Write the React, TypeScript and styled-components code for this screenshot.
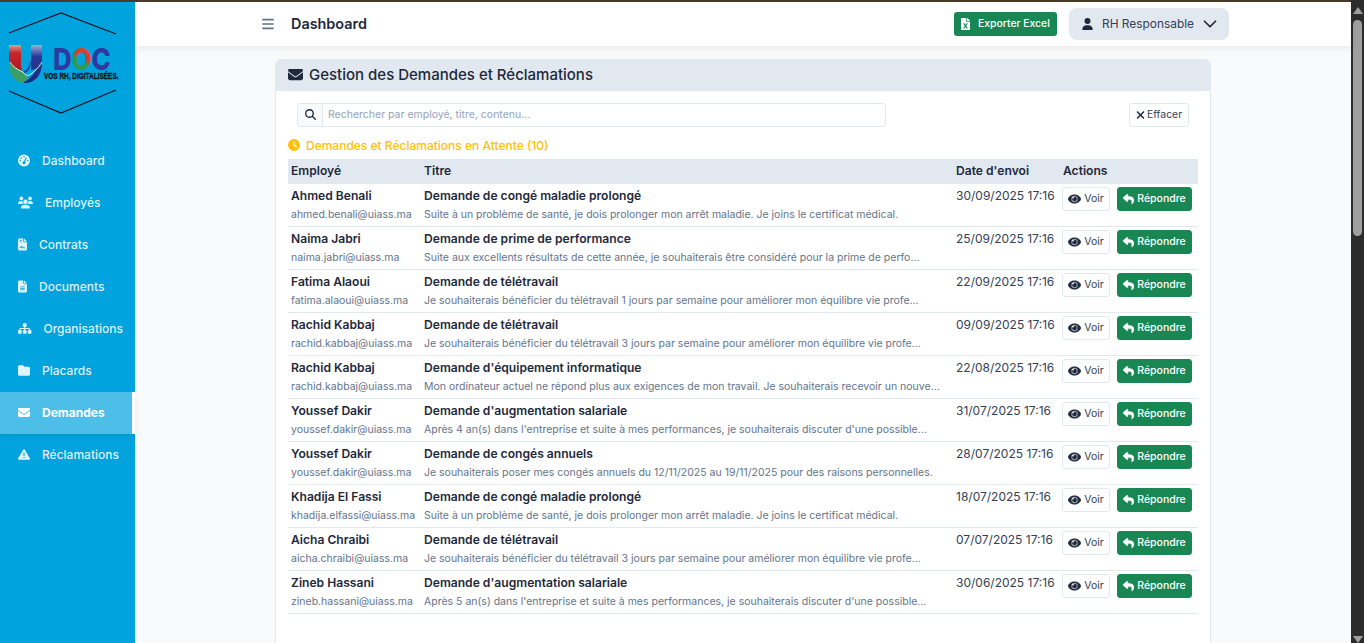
import React from 'react';
import styled, { createGlobalStyle } from 'styled-components';
import { ChevronDown } from 'lucide-react';
import { FaEye, FaFileExcel, FaReply } from 'react-icons/fa';
import {
  FaBars,
  FaClock,
  FaEnvelope,
  FaFileContract,
  FaFileLines,
  FaFolder,
  FaGaugeHigh,
  FaMagnifyingGlass,
  FaSitemap,
  FaTriangleExclamation,
  FaUser,
  FaUsers,
  FaXmark,
} from 'react-icons/fa6';

const GlobalStyle = createGlobalStyle`
  html, body {
    margin: 0;
    height: 100%;
    overflow: hidden;
  }
  body {
    font-family: Inter, "Liberation Sans", sans-serif;
    color: #1e293b;
    background: #f8fafc;
  }
  * {
    box-sizing: border-box;
  }
`;

const Shell = styled.div`
  display: flex;
  height: 100vh;
`;

const Page = styled.div`
  flex: 1;
  min-width: 0;
  display: flex;
  flex-direction: column;
`;

const TopStrip = styled.div`
  height: 2px;
  flex: none;
  background: #4b3b2a;
`;

const Frame = styled.div`
  display: flex;
  flex: 1;
  min-height: 0;
`;

const Sidebar = styled.aside`
  width: 135px;
  flex: none;
  background: #00a3de;
`;

const LogoBox = styled.div`
  height: 126px;
  margin-bottom: 12px;
  svg {
    display: block;
  }
`;

const Nav = styled.nav`
  display: flex;
  flex-direction: column;
`;

const NavItem = styled.a<{ $active?: boolean; $iconWidth: number }>`
  display: flex;
  align-items: center;
  gap: 12px;
  height: 42px;
  padding: 0 0 2px 18px;
  font-size: 12px;
  font-weight: ${p => (p.$active ? 700 : 500)};
  color: ${p => (p.$active ? '#fff' : 'rgba(255, 255, 255, 0.88)')};
  background: ${p => (p.$active ? 'rgba(255, 255, 255, 0.3)' : 'transparent')};
  border-right: 3px solid ${p => (p.$active ? '#fff' : 'transparent')};
  box-shadow: ${p => (p.$active ? '0 2px 5px rgba(0, 0, 0, 0.08)' : 'none')};
  svg {
    height: 13px;
    width: ${p => p.$iconWidth}px;
    flex: none;
  }
`;

const Main = styled.div`
  flex: 1;
  min-width: 0;
  display: flex;
  flex-direction: column;
`;

const Header = styled.header`
  position: relative;
  z-index: 1;
  flex: none;
  height: 44px;
  display: flex;
  align-items: center;
  padding: 0 122px 0 127px;
  background: #fff;
  box-shadow: 0 2px 8px rgba(0, 0, 0, 0.07);
`;

const MenuToggle = styled.span`
  display: flex;
  color: #64748b;
  margin-right: 17px;
  svg {
    height: 14px;
    width: 12px;
  }
`;

const PageTitle = styled.h1`
  margin: 0 0 2px;
  font-size: 14.4px;
  font-weight: 600;
  color: #1e293b;
`;

const HeaderActions = styled.div`
  margin-left: auto;
  display: flex;
  align-items: center;
  gap: 12px;
`;

const ExportButton = styled.button`
  display: flex;
  align-items: center;
  gap: 8px;
  width: 103px;
  height: 24px;
  padding: 0 0 2px 7px;
  border: 0;
  border-radius: 3px;
  background: #198754;
  color: #fff;
  font: 500 10.4px Inter, sans-serif;
  svg {
    height: 12px;
    width: 9px;
    margin-top: 1px;
  }
`;

const UserButton = styled.button`
  display: flex;
  align-items: center;
  width: 160px;
  height: 32px;
  padding: 0 8px 0 13px;
  border: 0;
  border-radius: 8px;
  background: #e2e8f0;
  color: #334155;
  font: 400 11.9px Inter, sans-serif;
  span {
    padding-bottom: 2px;
  }
  svg:first-child {
    color: #1e293b;
    height: 12px;
    width: 11px;
    margin-right: 9px;
  }
  svg:last-child {
    color: #1e293b;
    margin-left: auto;
  }
`;

const Content = styled.main`
  flex: 1;
  min-height: 0;
  overflow: hidden;
  padding: 13px 140px 0 140px;
`;

const Card = styled.section`
  min-height: 700px;
  background: #fff;
  border: 1px solid #e2e8f0;
  border-radius: 6px 6px 0 0;
`;

const CardHeader = styled.div`
  height: 31px;
  display: flex;
  align-items: center;
  gap: 6px;
  padding: 0 0 2px 12px;
  background: #e2e8f0;
  border-radius: 5px 5px 0 0;
  font-size: 15px;
  font-weight: 500;
  color: #1e293b;
  svg {
    height: 15px;
    width: 15px;
  }
`;

const CardBody = styled.div`
  padding: 12px 12px 0;
`;

const SearchRow = styled.div`
  display: flex;
  justify-content: space-between;
  padding: 0 9px;
`;

const SearchGroup = styled.div`
  display: flex;
  width: 589px;
  height: 24px;
  border: 1px solid #e2e8f0;
  border-radius: 3px;
`;

const SearchIcon = styled.span`
  width: 25px;
  display: flex;
  align-items: center;
  justify-content: center;
  padding-bottom: 1px;
  background: #f8fafc;
  border-right: 1px solid #e2e8f0;
  font-size: 11px;
  color: #1e293b;
`;

const SearchInput = styled.input`
  flex: 1;
  border: 0;
  outline: 0;
  padding: 0 5px 2px;
  background: transparent;
  font: 400 10.5px Inter, sans-serif;
  &::placeholder {
    color: #94a3b8;
    opacity: 1;
  }
`;

const ClearButton = styled.button`
  display: flex;
  align-items: center;
  justify-content: center;
  gap: 2px;
  width: 60px;
  height: 24px;
  padding: 0 0 2px;
  border: 1px solid #e2e8f0;
  border-radius: 3px;
  background: #fff;
  color: #334155;
  font: 400 10.4px Inter, sans-serif;
  svg {
    color: #1e293b;
    height: 12px;
    width: 9px;
    margin-top: 1px;
  }
`;

const SectionTitle = styled.h2`
  display: flex;
  align-items: center;
  gap: 6px;
  height: 18px;
  margin: 9px 0 5px;
  font-size: 12px;
  font-weight: 500;
  color: #ffc107;
  svg {
    height: 12px;
    width: 12px;
  }
`;

const Table = styled.table`
  width: 100%;
  table-layout: fixed;
  border-collapse: separate;
  border-spacing: 0;
`;

const HeadCell = styled.th<{ $width: number }>`
  width: ${p => p.$width}px;
  height: 25px;
  padding: 0 3px 2px;
  text-align: left;
  background: #e2e8f0;
  font-size: 12.1px;
  font-weight: 600;
  color: #1e293b;
`;

const Cell = styled.td`
  height: 43px;
  padding: 4px 3px 0;
  border-bottom: 1px solid #e2e8f0;
  vertical-align: top;
  font-size: 12px;
  white-space: nowrap;
  overflow: hidden;
`;

const Strong = styled.div`
  font-size: 12.1px;
  line-height: 16px;
  font-weight: 600;
  color: #1e293b;
`;

const Muted = styled.div`
  margin-top: 3px;
  font-size: 10.5px;
  line-height: 16px;
  color: #64748b;
`;

const DateText = styled.div`
  line-height: 16px;
  color: #334155;
`;

const Actions = styled.div`
  display: flex;
  gap: 7px;
  margin: -1px 0 0 -1px;
`;

const RowButton = styled.button<{ $primary?: boolean }>`
  display: flex;
  align-items: center;
  justify-content: center;
  gap: 3px;
  width: ${p => (p.$primary ? 75 : 48)}px;
  height: 24px;
  padding: 0 0 1px;
  border: 1px solid ${p => (p.$primary ? '#198754' : '#e2e8f0')};
  border-radius: 3px;
  background: ${p => (p.$primary ? '#198754' : '#fff')};
  color: ${p => (p.$primary ? '#fff' : '#334155')};
  font: ${p => (p.$primary ? 500 : 400)} 10.5px Inter, sans-serif;
  svg {
    color: ${p => (p.$primary ? '#fff' : '#1e293b')};
    height: 12px;
    width: ${p => (p.$primary ? 11 : 13)}px;
    stroke-width: 24px;
  }
`;

const ScrollRail = styled.div`
  width: 13px;
  flex: none;
  display: flex;
  flex-direction: column;
  align-items: center;
  padding: 7px 0 0;
  background: #2c2c2c;
`;

const ScrollArrow = styled.span<{ $down?: boolean }>`
  flex: none;
  width: 0;
  height: 0;
  border-left: 5px solid transparent;
  border-right: 5px solid transparent;
  ${p => (p.$down ? 'border-top: 7px solid #9f9f9f;' : 'border-bottom: 7px solid #9f9f9f;')}
`;

const ScrollThumb = styled.span`
  flex: none;
  width: 9px;
  height: 216px;
  margin-top: 6px;
  border-radius: 5px;
  background: #9f9f9f;
`;

const ScrollGap = styled.span`
  flex: 1;
`;

const navItems = [
  { label: 'Dashboard', icon: <FaGaugeHigh />, width: 12 },
  { label: 'Employés', icon: <FaUsers />, width: 15 },
  { label: 'Contrats', icon: <FaFileContract />, width: 9 },
  { label: 'Documents', icon: <FaFileLines />, width: 9 },
  { label: 'Organisations', icon: <FaSitemap />, width: 13.5 },
  { label: 'Placards', icon: <FaFolder />, width: 12 },
  { label: 'Demandes', icon: <FaEnvelope />, width: 12, active: true },
  { label: 'Réclamations', icon: <FaTriangleExclamation />, width: 12 },
];

const requests = [
  {
    name: 'Ahmed Benali',
    email: 'ahmed.benali@uiass.ma',
    title: 'Demande de congé maladie prolongé',
    text: 'Suite à un problème de santé, je dois prolonger mon arrêt maladie. Je joins le certificat médical.',
    date: '30/09/2025 17:16',
  },
  {
    name: 'Naima Jabri',
    email: 'naima.jabri@uiass.ma',
    title: 'Demande de prime de performance',
    text: 'Suite aux excellents résultats de cette année, je souhaiterais être considéré pour la prime de perfo...',
    date: '25/09/2025 17:16',
  },
  {
    name: 'Fatima Alaoui',
    email: 'fatima.alaoui@uiass.ma',
    title: 'Demande de télétravail',
    text: 'Je souhaiterais bénéficier du télétravail 1 jours par semaine pour améliorer mon équilibre vie profe...',
    date: '22/09/2025 17:16',
  },
  {
    name: 'Rachid Kabbaj',
    email: 'rachid.kabbaj@uiass.ma',
    title: 'Demande de télétravail',
    text: 'Je souhaiterais bénéficier du télétravail 3 jours par semaine pour améliorer mon équilibre vie profe...',
    date: '09/09/2025 17:16',
  },
  {
    name: 'Rachid Kabbaj',
    email: 'rachid.kabbaj@uiass.ma',
    title: "Demande d'équipement informatique",
    text: 'Mon ordinateur actuel ne répond plus aux exigences de mon travail. Je souhaiterais recevoir un nouve...',
    date: '22/08/2025 17:16',
  },
  {
    name: 'Youssef Dakir',
    email: 'youssef.dakir@uiass.ma',
    title: "Demande d'augmentation salariale",
    text: "Après 4 an(s) dans l'entreprise et suite à mes performances, je souhaiterais discuter d'une possible...",
    date: '31/07/2025 17:16',
  },
  {
    name: 'Youssef Dakir',
    email: 'youssef.dakir@uiass.ma',
    title: 'Demande de congés annuels',
    text: 'Je souhaiterais poser mes congés annuels du 12/11/2025 au 19/11/2025 pour des raisons personnelles.',
    date: '28/07/2025 17:16',
  },
  {
    name: 'Khadija El Fassi',
    email: 'khadija.elfassi@uiass.ma',
    title: 'Demande de congé maladie prolongé',
    text: 'Suite à un problème de santé, je dois prolonger mon arrêt maladie. Je joins le certificat médical.',
    date: '18/07/2025 17:16',
  },
  {
    name: 'Aicha Chraibi',
    email: 'aicha.chraibi@uiass.ma',
    title: 'Demande de télétravail',
    text: 'Je souhaiterais bénéficier du télétravail 3 jours par semaine pour améliorer mon équilibre vie profe...',
    date: '07/07/2025 17:16',
  },
  {
    name: 'Zineb Hassani',
    email: 'zineb.hassani@uiass.ma',
    title: "Demande d'augmentation salariale",
    text: "Après 5 an(s) dans l'entreprise et suite à mes performances, je souhaiterais discuter d'une possible...",
    date: '30/06/2025 17:16',
  },
];

// viewBox starts at y=2 because the sidebar sits under the top strip
const Logo = () => (
  <svg width="135" height="126" viewBox="0 2 135 126">
    <defs>
      <linearGradient id="ring" x1="0" y1="1" x2="1" y2="0">
        <stop offset="0.46" stopColor="#2f9a5a" />
        <stop offset="0.54" stopColor="#d9402e" />
      </linearGradient>
      <linearGradient id="leftArm" x1="0" y1="0" x2="0" y2="1">
        <stop offset="0" stopColor="#d9a09c" />
        <stop offset="0.3" stopColor="#c8262b" />
        <stop offset="1" stopColor="#a81c24" />
      </linearGradient>
      <linearGradient id="rightArm" x1="0" y1="0" x2="0" y2="1">
        <stop offset="0" stopColor="#a4acd6" />
        <stop offset="0.3" stopColor="#2b3a98" />
        <stop offset="1" stopColor="#1a2778" />
      </linearGradient>
    </defs>
    <path d="M9 33 61 13 116 34" fill="none" stroke="#14141f" strokeWidth="1.3" />
    <path d="M9 91 61 113 116 90" fill="none" stroke="#14141f" strokeWidth="1.3" />
    <path d="M9 45h12v20c0 2 .5 4 1.500 6C16 69 11 66 9 61z" fill="url(#leftArm)" />
    <path d="M31 45h11v18C42 76 34 83 25 83l-2-.2C28 80 33 76 37 68c-2 1-4 2-6 2z" fill="url(#rightArm)" />
    <path d="M31 60c0 6-2 11-6 13-1 0-2-1-2.500-2 2 1 5 0 8.500-11z" fill="#2b3a98" />
    <path d="M9 62c3 4 8 7 13 9 2 3 4 5 7 5-2 3-4 5-6 6.800C14 82 9 74 9 62z" fill="#3f9e68" />
    <path d="M10 62c3 5 8 8 13 10 2 3 4 4 6 3 5-2 9-7 13-13" fill="none" stroke="#eef3f6" strokeWidth="0.9" />
    <g transform="translate(53 70) scale(0.86 1)">
      <text fontFamily="Inter, sans-serif" fontSize="30" fontWeight="800" fill="#2b3a9e">
        D<tspan fill="url(#ring)">O</tspan>C
      </text>
    </g>
    <g transform="translate(44 79) scale(0.788 1)">
      <text fontFamily="Liberation Sans, sans-serif" fontSize="8.2" fontWeight="700" fill="#111118" stroke="#111118" strokeWidth="0.3">
        VOS RH, DIGITALISÉES.
      </text>
    </g>
  </svg>
);

const App: React.FC = () => {
  return (
    <Shell>
      <GlobalStyle />
      <Page>
        <TopStrip />
        <Frame>
          <Sidebar>
            <LogoBox>
              <Logo />
            </LogoBox>
            <Nav>
              {navItems.map(item => (
                <NavItem key={item.label} $active={item.active} $iconWidth={item.width}>
                  {item.icon}
                  {item.label}
                </NavItem>
              ))}
            </Nav>
          </Sidebar>
          <Main>
            <Header>
              <MenuToggle>
                <FaBars />
              </MenuToggle>
              <PageTitle>Dashboard</PageTitle>
              <HeaderActions>
                <ExportButton>
                  <FaFileExcel />
                  Exporter Excel
                </ExportButton>
                <UserButton>
                  <FaUser />
                  <span>RH Responsable</span>
                  <ChevronDown size={22} strokeWidth={1.9} />
                </UserButton>
              </HeaderActions>
            </Header>
            <Content>
              <Card>
                <CardHeader>
                  <FaEnvelope />
                  Gestion des Demandes et Réclamations
                </CardHeader>
                <CardBody>
                  <SearchRow>
                    <SearchGroup>
                      <SearchIcon>
                        <FaMagnifyingGlass />
                      </SearchIcon>
                      <SearchInput placeholder="Rechercher par employé, titre, contenu..." />
                    </SearchGroup>
                    <ClearButton>
                      <FaXmark />
                      Effacer
                    </ClearButton>
                  </SearchRow>
                  <SectionTitle>
                    <FaClock />
                    Demandes et Réclamations en Attente (10)
                  </SectionTitle>
                  <Table>
                    <thead>
                      <tr>
                        <HeadCell $width={133}>Employé</HeadCell>
                        <HeadCell $width={532}>Titre</HeadCell>
                        <HeadCell $width={107}>Date d'envoi</HeadCell>
                        <HeadCell $width={138}>Actions</HeadCell>
                      </tr>
                    </thead>
                    <tbody>
                      {requests.map(r => (
                        <tr key={r.date}>
                          <Cell>
                            <Strong>{r.name}</Strong>
                            <Muted>{r.email}</Muted>
                          </Cell>
                          <Cell>
                            <Strong>{r.title}</Strong>
                            <Muted>{r.text}</Muted>
                          </Cell>
                          <Cell>
                            <DateText>{r.date}</DateText>
                          </Cell>
                          <Cell>
                            <Actions>
                              <RowButton>
                                <FaEye />
                                Voir
                              </RowButton>
                              <RowButton $primary>
                                <FaReply />
                                Répondre
                              </RowButton>
                            </Actions>
                          </Cell>
                        </tr>
                      ))}
                    </tbody>
                  </Table>
                </CardBody>
              </Card>
            </Content>
          </Main>
        </Frame>
      </Page>
      <ScrollRail>
        <ScrollArrow />
        <ScrollThumb />
        <ScrollGap />
        <ScrollArrow $down />
      </ScrollRail>
    </Shell>
  );
};

export default App;
